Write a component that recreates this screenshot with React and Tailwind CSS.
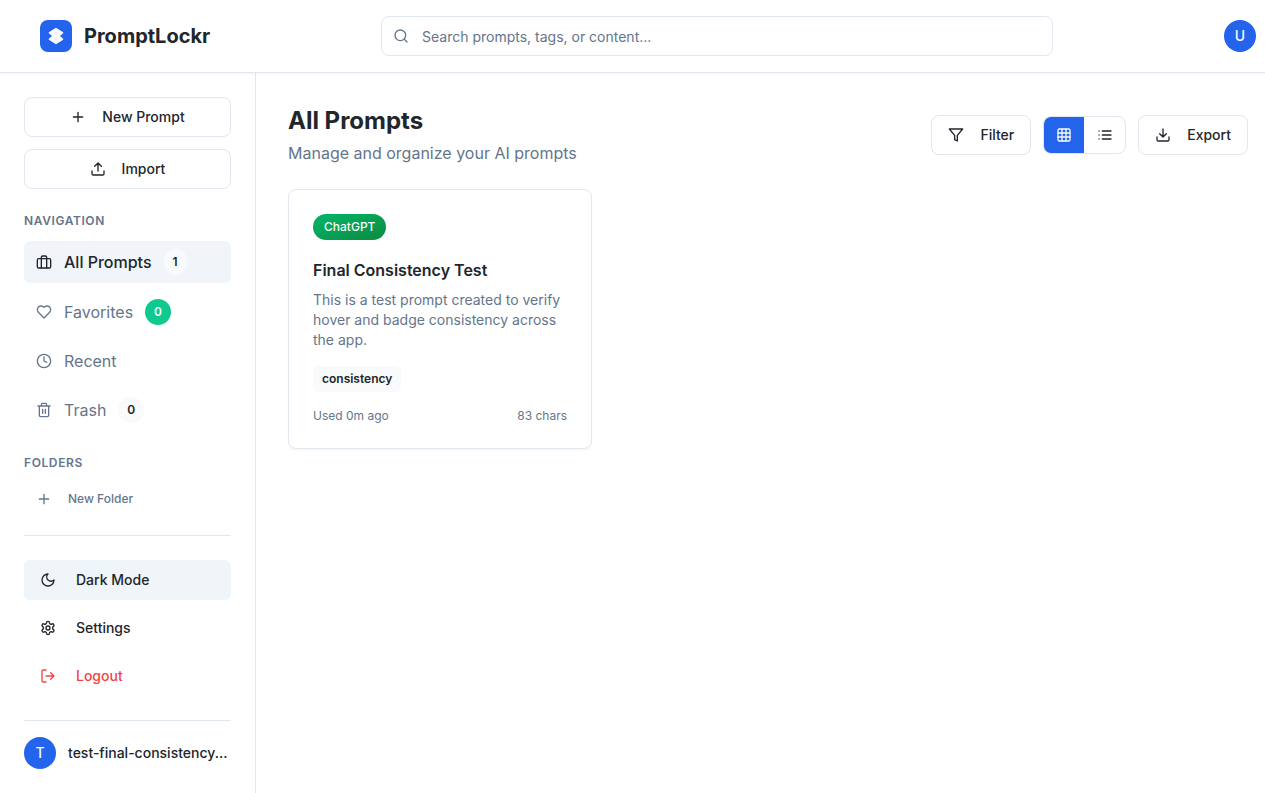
import React from "react";

const paths = {
  plus: <path d="M5 12h14M12 5v14" />,
  upload: <path d="M21 15v4a2 2 0 0 1-2 2H5a2 2 0 0 1-2-2v-4M17 8l-5-5-5 5M12 3v12" />,
  download: <path d="M21 15v4a2 2 0 0 1-2 2H5a2 2 0 0 1-2-2v-4M7 10l5 5 5-5M12 15V3" />,
  briefcase: (
    <>
      <rect width="20" height="14" x="2" y="7" rx="2" />
      <path d="M16 21V5a2 2 0 0 0-2-2h-4a2 2 0 0 0-2 2v16" />
    </>
  ),
  heart: (
    <path d="M19 14c1.49-1.46 3-3.21 3-5.5A5.5 5.5 0 0 0 16.5 3c-1.76 0-3 .5-4.5 2-1.5-1.5-2.74-2-4.5-2A5.5 5.5 0 0 0 2 8.5c0 2.3 1.5 4.05 3 5.5l7 7Z" />
  ),
  clock: (
    <>
      <circle cx="12" cy="12" r="10" />
      <path d="M12 6v6l4 2" />
    </>
  ),
  trash: (
    <path d="M3 6h18M19 6v14c0 1-1 2-2 2H7c-1 0-2-1-2-2V6M8 6V4c0-1 1-2 2-2h4c1 0 2 1 2 2v2M10 11v6M14 11v6" />
  ),
  moon: <path d="M12 3a6 6 0 0 0 9 9 9 9 0 1 1-9-9Z" />,
  settings: (
    <>
      <path d="M12.22 2h-.44a2 2 0 0 0-2 2v.18a2 2 0 0 1-1 1.73l-.43.25a2 2 0 0 1-2 0l-.15-.08a2 2 0 0 0-2.73.73l-.22.38a2 2 0 0 0 .73 2.73l.15.1a2 2 0 0 1 1 1.72v.51a2 2 0 0 1-1 1.74l-.15.09a2 2 0 0 0-.73 2.73l.22.38a2 2 0 0 0 2.73.73l.15-.08a2 2 0 0 1 2 0l.43.25a2 2 0 0 1 1 1.73V20a2 2 0 0 0 2 2h.44a2 2 0 0 0 2-2v-.18a2 2 0 0 1 1-1.73l.43-.25a2 2 0 0 1 2 0l.15.08a2 2 0 0 0 2.73-.73l.22-.39a2 2 0 0 0-.73-2.73l-.15-.08a2 2 0 0 1-1-1.74v-.5a2 2 0 0 1 1-1.74l.15-.09a2 2 0 0 0 .73-2.73l-.22-.38a2 2 0 0 0-2.73-.73l-.15.08a2 2 0 0 1-2 0l-.43-.25a2 2 0 0 1-1-1.73V4a2 2 0 0 0-2-2z" />
      <circle cx="12" cy="12" r="3" />
    </>
  ),
  logout: <path d="M9 21H5a2 2 0 0 1-2-2V5a2 2 0 0 1 2-2h4M16 17l5-5-5-5M21 12H9" />,
  search: (
    <>
      <circle cx="11" cy="11" r="8" />
      <path d="m21 21-4.3-4.3" />
    </>
  ),
  filter: <path d="M22 3H2l8 9.46V19l4 2v-8.54L22 3z" />,
  grid: (
    <>
      <rect width="18" height="18" x="3" y="3" rx="2" />
      <path d="M3 9h18M3 15h18M9 3v18M15 3v18" />
    </>
  ),
  list: <path d="M8 6h13M8 12h13M8 18h13M3 6h.01M3 12h.01M3 18h.01" />,
};

function Icon({ name }) {
  return (
    <svg
      className="size-4 shrink-0"
      viewBox="0 0 24 24"
      fill="none"
      stroke="currentColor"
      strokeWidth="2"
      strokeLinecap="round"
      strokeLinejoin="round"
    >
      {paths[name]}
    </svg>
  );
}

function OutlineButton({ icon, children, className = "" }) {
  return (
    <button
      className={`flex h-10 items-center justify-center gap-4 rounded-lg border border-[#e1e7ef] px-4 text-sm font-medium ${className}`}
    >
      <Icon name={icon} />
      {children}
    </button>
  );
}

function NavItem({ icon, label, count, active, badge = "bg-[#f8fafc] text-[#21262c]" }) {
  return (
    <a
      className={`flex items-center gap-3 rounded-md px-3 py-2 ${
        active ? "bg-[#f1f5f9] font-medium text-[#21262c]" : "text-[#65758b]"
      }`}
    >
      <Icon name={icon} />
      <span>{label}</span>
      {count !== undefined && (
        <span
          className={`flex h-[26px] items-center rounded-full px-[9px] text-xs font-semibold ${badge}`}
        >
          {count}
        </span>
      )}
    </a>
  );
}

function MenuItem({ icon, children, className = "" }) {
  return (
    <button className={`flex h-10 items-center gap-5 rounded-md px-4 text-sm font-medium ${className}`}>
      <Icon name={icon} />
      {children}
    </button>
  );
}

function Header() {
  return (
    <header className="z-10 flex h-[73px] shrink-0 items-center border-b border-[#e1e7ef] pr-[9px] pl-10 shadow-xs">
      <div className="flex w-[341px] items-center gap-3">
        <div className="flex size-8 items-center justify-center rounded-lg bg-[#2463eb] text-[#f8fafc]">
          <svg className="size-5" viewBox="0 0 20 20" fill="currentColor">
            <path d="M10 1.8 17.2 6.3V7.3L14 10 17.2 12.7V13.7L10 18.2 2.8 13.7V12.7L6 10 2.8 7.3V6.3Z" />
          </svg>
        </div>
        <span className="text-xl font-bold">PromptLockr</span>
      </div>
      <div className="flex h-10 w-[672px] items-center gap-[13px] rounded-lg border border-[#e1e7ef] px-[11px] text-sm text-[#65758b]">
        <Icon name="search" />
        <span className="pt-0.5">Search prompts, tags, or content...</span>
      </div>
      <div className="ml-auto flex size-8 items-center justify-center rounded-full bg-[#2463eb] text-sm font-medium text-[#f8fafc]">
        U
      </div>
    </header>
  );
}

function Sidebar() {
  return (
    <aside className="flex w-64 shrink-0 flex-col border-r border-[#e1e7ef] px-6 pt-6">
      <div className="flex flex-col gap-3">
        <OutlineButton icon="plus">New Prompt</OutlineButton>
        <OutlineButton icon="upload">Import</OutlineButton>
      </div>
      <h2 className="mt-6 text-xs font-semibold tracking-[0.6px] text-[#65758b]">NAVIGATION</h2>
      <nav className="mt-3 flex flex-col gap-2">
        <NavItem icon="briefcase" label="All Prompts" count={1} active />
        <NavItem icon="heart" label="Favorites" count={0} badge="bg-[#10c98f] text-[#f8fafc]" />
        <NavItem icon="clock" label="Recent" />
        <NavItem icon="trash" label="Trash" count={0} />
      </nav>
      <h2 className="mt-6 text-xs font-semibold tracking-[0.6px] text-[#65758b]">FOLDERS</h2>
      <button className="mt-2.5 flex h-9 items-center gap-4 px-3 text-xs font-medium text-[#65758b]">
        <Icon name="plus" />
        New Folder
      </button>
      <div className="mt-[18px] flex flex-col gap-2 border-t border-[#e1e7ef] pt-6">
        <MenuItem icon="moon" className="bg-[#eff5f8]">Dark Mode</MenuItem>
        <MenuItem icon="settings">Settings</MenuItem>
        <MenuItem icon="logout" className="text-[#ef4444]">Logout</MenuItem>
      </div>
      <div className="mt-6 flex items-center gap-3 border-t border-[#e1e7ef] pt-4">
        <div className="flex size-8 shrink-0 items-center justify-center rounded-full bg-[#2463eb] text-sm font-medium text-[#f8fafc]">
          T
        </div>
        <span className="text-sm font-medium whitespace-nowrap">test-final-consistency...</span>
      </div>
    </aside>
  );
}

function PromptCard() {
  return (
    <article className="flex h-[260px] w-[304px] flex-col items-start rounded-lg border border-[#e1e7ef] p-6 shadow-xs">
      <span className="flex h-[26px] items-center rounded-full bg-linear-to-br from-[#00b76a] to-[#0c8a3f] px-[11px] text-xs font-medium text-[#f8fafc]">
        ChatGPT
      </span>
      <h3 className="mt-[18px] text-base font-semibold">Final Consistency Test</h3>
      <p className="mt-2 text-sm text-[#65758b]">
        This is a test prompt created to verify hover and badge consistency across the app.
      </p>
      <span className="mt-4 flex h-[26px] items-center rounded-md bg-[#f8fafc] px-[9px] text-xs font-semibold">
        consistency
      </span>
      <div className="mt-4 flex w-full justify-between text-xs text-[#65758b]">
        <span>Used 0m ago</span>
        <span>83 chars</span>
      </div>
    </article>
  );
}

export default function App() {
  return (
    <div className="flex h-screen flex-col overflow-hidden bg-white font-['Inter',sans-serif] text-[#21262c]">
      <Header />
      <div className="flex min-h-0 flex-1">
        <Sidebar />
        <main className="flex-1 pt-8 pr-[17px] pl-8">
          <div className="flex items-center justify-between">
            <div>
              <h1 className="text-2xl font-bold">All Prompts</h1>
              <p className="mt-1 text-base text-[#65758b]">Manage and organize your AI prompts</p>
            </div>
            <div className="flex items-center gap-3">
              <OutlineButton icon="filter">Filter</OutlineButton>
              <div className="flex h-[38px] overflow-hidden rounded-lg border border-[#e1e7ef]">
                <button className="flex w-10 items-center justify-center bg-[#2463eb] text-[#f8fafc]">
                  <Icon name="grid" />
                </button>
                <button className="flex w-[41px] items-center justify-center">
                  <Icon name="list" />
                </button>
              </div>
              <OutlineButton icon="download">Export</OutlineButton>
            </div>
          </div>
          <div className="mt-6">
            <PromptCard />
          </div>
        </main>
      </div>
    </div>
  );
}
